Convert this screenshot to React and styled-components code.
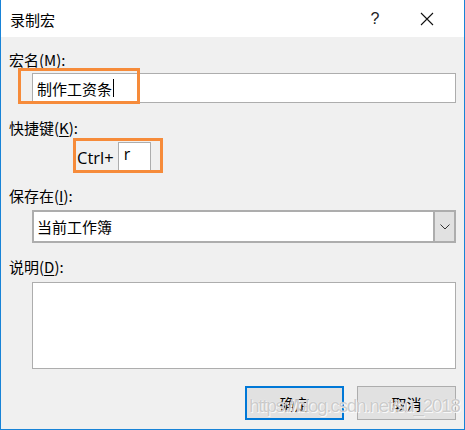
import React from 'react'
import styled, { createGlobalStyle } from 'styled-components'

const GlobalStyle = createGlobalStyle`
  body {
    margin: 0;
    background: #f0f0f0;
    font-family: "Noto Sans CJK SC", "Noto Sans", sans-serif;
  }
`

const Window = styled.div`
  position: relative;
  width: 465px;
  height: 430px;
  box-sizing: border-box;
  background: #f0f0f0;
  border: 1px solid #1883d7;
  border-top: none;
  color: #000;
  overflow: hidden;
`

const TitleBar = styled.div`
  height: 37px;
  background: #fff;
  display: flex;
  align-items: center;
  padding-left: 9px;
  font-size: 15px;
`

const Title = styled.div`
  flex: 1;
  margin-top: 1px;
`

const TitleButton = styled.div`
  width: ${p => p.w}px;
  display: flex;
  justify-content: center;
  align-items: center;
  font-family: "Liberation Sans", sans-serif;
  font-size: 16px;
  color: #222;
`

const Body = styled.div`
  padding: 13px 8px 0 8px;
`

const Label = styled.div`
  height: 20px;
  line-height: 20px;
  font-size: 15px;
  margin-top: ${p => p.mt || 0}px;
  u {
    text-underline-offset: 2px;
  }
`

const Field = styled.div`
  position: relative;
  margin: ${p => p.mt || 0}px 0 0 23px;
`

const TextBox = styled.div`
  height: ${p => p.h || 30}px;
  box-sizing: border-box;
  background: #fff;
  border: 1px solid #adadad;
  display: flex;
  align-items: center;
  padding-left: 4px;
  font-size: 15px;
`

const Caret = styled.span`
  display: inline-block;
  width: 1px;
  height: 18px;
  background: #000;
  margin-left: 1px;
`

const Highlight = styled.div`
  position: absolute;
  left: ${p => p.x}px;
  top: ${p => p.y}px;
  width: ${p => p.w}px;
  height: ${p => p.h}px;
  border: 3px solid #f68b3a;
  box-sizing: border-box;
  pointer-events: none;
`

const ShortcutRow = styled.div`
  position: relative;
  display: flex;
  align-items: center;
  margin: 4px 0 0 68px;
  height: 30px;
`

const CtrlText = styled.span`
  font-family: "Open Sans", "Liberation Sans", sans-serif;
  font-size: 16.5px;
  margin-right: 4px;
`

const KeyBox = styled.div`
  width: 33px;
  height: 30px;
  box-sizing: border-box;
  background: #fff;
  border: 1px solid #adadad;
  padding: 0 0 6px 5px;
  font-family: "Open Sans", "Liberation Sans", sans-serif;
  font-size: 16px;
  line-height: 22px;
`

const Select = styled.div`
  height: 33px;
  box-sizing: border-box;
  border: 2px solid #adadad;
  background: #fff;
  display: flex;
`

const SelectText = styled.div`
  flex: 1;
  display: flex;
  align-items: center;
  padding-left: 3px;
  font-size: 15px;
`

const DropButton = styled.div`
  width: 19px;
  background: #e1e1e1;
  border-left: 2px solid #adadad;
  display: flex;
  align-items: center;
  justify-content: center;
`

const Buttons = styled.div`
  display: flex;
  justify-content: flex-end;
  gap: 13px;
  margin-top: 17px;
`

const Button = styled.div`
  width: 99px;
  height: 34px;
  box-sizing: border-box;
  background: #e1e1e1;
  border: ${p => (p.primary ? '2px solid #0078d7' : '1px solid #adadad')};
  display: flex;
  align-items: center;
  justify-content: center;
  font-size: 15px;
`

const Watermark = styled.div`
  position: absolute;
  left: 248px;
  top: 395px;
  white-space: nowrap;
  font-family: "Liberation Sans", sans-serif;
  font-size: 19px;
  letter-spacing: -1.3px;
  color: rgba(190, 190, 190, 0.8);
  text-shadow: 0 0 1px #fff, 1px 1px 0 rgba(255, 255, 255, 0.8);
  pointer-events: none;
`

const Cross = () => (
  <svg width="14" height="14" viewBox="0 0 14 14">
    <path d="M1 1 L13 13 M13 1 L1 13" stroke="#111" strokeWidth="1.1" />
  </svg>
)

const Chevron = () => (
  <svg width="10" height="6" viewBox="0 0 10 6">
    <path d="M0.5 0.5 L5 5 L9.5 0.5" fill="none" stroke="#333" strokeWidth="1" />
  </svg>
)

export default function App() {
  return (
    <>
      <GlobalStyle />
      <Window>
        <TitleBar>
          <Title>录制宏</Title>
          <TitleButton w={30}>?</TitleButton>
          <TitleButton w={74}>
            <Cross />
          </TitleButton>
        </TitleBar>
        <Body>
          <Label>
            宏名(<u>M</u>):
          </Label>
          <Field mt={3}>
            <TextBox>
              制作工资条<Caret />
            </TextBox>
            <Highlight x={-14} y={-5} w={122} h={36} />
          </Field>
          <Label mt={15}>
            快捷键(<u>K</u>):
          </Label>
          <ShortcutRow>
            <CtrlText>Ctrl+</CtrlText>
            <KeyBox>r</KeyBox>
            <Highlight x={-4} y={-4} w={90} h={35} />
          </ShortcutRow>
          <Label mt={14}>
            保存在(<u>I</u>):
          </Label>
          <Field mt={4}>
            <Select>
              <SelectText>当前工作簿</SelectText>
              <DropButton>
                <Chevron />
              </DropButton>
            </Select>
          </Field>
          <Label mt={14}>
            说明(<u>D</u>):
          </Label>
          <Field mt={5}>
            <TextBox h={87} />
          </Field>
          <Buttons>
            <Button primary>确定</Button>
            <Button>取消</Button>
          </Buttons>
        </Body>
        <Watermark>https://blog.csdn.net/su_2018</Watermark>
      </Window>
    </>
  )
}
